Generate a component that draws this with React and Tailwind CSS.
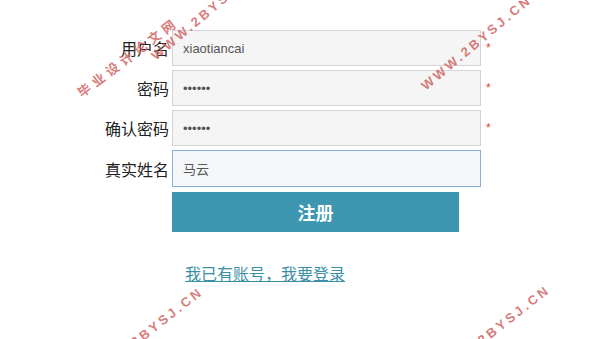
import React from 'react';

const CJK = "font-['Microsoft_YaHei','Noto_Sans_CJK_SC','Liberation_Sans',sans-serif]";
const LATIN = "font-['Liberation_Sans','Noto_Sans_CJK_SC',sans-serif]";

const Row = ({ label, children, required }) => (
    <div className="flex items-center">
        <div className={`w-[169px] text-right text-[16px] text-[#222] ${CJK}`}>{label}</div>
        <div className="ml-[3px]">{children}</div>
        {required && (
            <span className={`ml-[5px] text-[12px] leading-none text-[#e03a3a] ${LATIN}`}>*</span>
        )}
    </div>
);

const inputCls = `w-[309px] h-[36px] px-[10px] bg-[#f5f5f5] border border-[#d4d4d4] text-[13px] text-[#555] outline-none ${LATIN}`;

const markCls = `absolute whitespace-nowrap origin-top-left font-bold text-[13px] text-[#d06464]/85 pointer-events-none ${LATIN}`;

export default function App() {
    return (
        <div className="relative w-[616px] h-[339px] overflow-hidden bg-white">
            <div className="flex flex-col gap-1 pt-[30px]">
                <Row label="用户名" required>
                    <input className={inputCls} defaultValue="xiaotiancai" readOnly />
                </Row>
                <Row label="密码" required>
                    <input type="password" className={inputCls} defaultValue="123456" readOnly />
                </Row>
                <Row label="确认密码" required>
                    <input type="password" className={inputCls} defaultValue="123456" readOnly />
                </Row>
                <Row label="真实姓名">
                    <input
                        className={`w-[309px] h-[37px] px-[10px] bg-[#f4f6fa] border border-[#88aee0] text-[13px] text-[#555] outline-none ${CJK}`}
                        defaultValue="马云"
                        readOnly
                    />
                </Row>
                <div className="flex pl-[172px] mt-px">
                    <button className={`w-[287px] h-[40px] bg-[#3d97b1] text-white text-[18px] font-bold ${CJK}`}>
                        注册
                    </button>
                </div>
                <div className="pl-[185px] mt-[26px]">
                    <a href="#" className={`text-[16px] leading-[20px] text-[#3b8fa6] underline ${CJK}`}>
                        我已有账号，我要登录
                    </a>
                </div>
            </div>

            {/* watermark */}
            <span className={`${markCls} left-[73px] top-[86px] -rotate-[37deg] tracking-[4.5px] ${CJK}`}>毕业设计论文网</span>
            <span className={`${markCls} left-[147px] top-[50px] -rotate-40 tracking-[3px]`}>WWW.2BYSJ.CN</span>
            <span className={`${markCls} left-[417px] top-[80px] -rotate-40 tracking-[3px]`}>WWW.2BYSJ.CN</span>
            <span className={`${markCls} left-[86px] top-[368px] -rotate-[38deg] tracking-[3px]`}>WWW.2BYSJ.CN</span>
            <span className={`${markCls} left-[433px] top-[366px] -rotate-[38deg] tracking-[3px]`}>WWW.2BYSJ.CN</span>
        </div>
    );
}
